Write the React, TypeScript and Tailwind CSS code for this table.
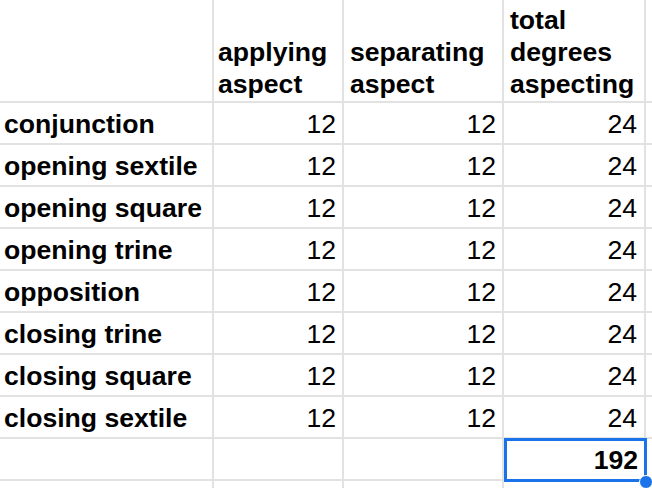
import React from "react";

const rows = [
  "conjunction",
  "opening sextile",
  "opening square",
  "opening trine",
  "opposition",
  "closing trine",
  "closing square",
  "closing sextile",
];

export default function App() {
  return (
    <div
      className="w-[652px] h-[488px] overflow-hidden bg-[#e2e2e2] text-black"
      style={{ fontFamily: '"Liberation Sans", Arial, sans-serif' }}
    >
      <div className="grid grid-cols-[212px_128px_158px_140px_1fr] grid-rows-[101px_repeat(9,40px)_20px] gap-[2px] text-[26.6px]">
        {/* header */}
        <div className="bg-white" />
        <div className="bg-white flex items-end px-[4px] pb-[1px] font-bold leading-[32px]">
          <span>
            applying
            <br />
            aspect
          </span>
        </div>
        <div className="bg-white flex items-end px-[6px] pb-[1px] font-bold leading-[32px]">
          <span>
            separating
            <br />
            aspect
          </span>
        </div>
        <div className="bg-white flex items-end px-[6px] pb-[1px] font-bold leading-[32px]">
          <span>
            total
            <br />
            degrees
            <br />
            aspecting
          </span>
        </div>
        <div className="bg-white" />

        {rows.map((r) => (
          <React.Fragment key={r}>
            <div className="bg-white flex items-center pl-[4px] pt-[2px] font-bold leading-none whitespace-nowrap">
              {r}
            </div>
            <div className="bg-white flex items-center justify-end pr-[6px] pt-[2px] leading-none">12</div>
            <div className="bg-white flex items-center justify-end pr-[6px] pt-[2px] leading-none">12</div>
            <div className="bg-white flex items-center justify-end pr-[7px] pt-[2px] leading-none">24</div>
            <div className="bg-white" />
          </React.Fragment>
        ))}

        {/* total row */}
        <div className="bg-white" />
        <div className="bg-white" />
        <div className="bg-white" />
        <div className="bg-white relative">
          <div className="absolute left-0 top-[-1px] right-[-3px] bottom-[-3px] border-[3px] border-[#1a73e8] flex items-center justify-end pr-[6px] pt-[1px] font-bold leading-none">
            192
          </div>
          <div className="absolute right-[-9px] bottom-[-10px] w-[14px] h-[14px] rounded-full bg-[#1a73e8] border border-white" />
        </div>
        <div className="bg-white" />

        {Array.from({ length: 5 }).map((_, i) => (
          <div key={i} className="bg-white" />
        ))}
      </div>
    </div>
  );
}
